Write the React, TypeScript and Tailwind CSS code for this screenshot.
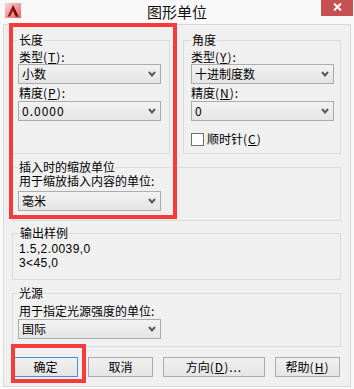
import React from 'react';

// mnemonic letter, underlined like a Win32 accelerator
const Mn: React.FC<{ children: React.ReactNode }> = ({ children }) => (
  <span className="underline underline-offset-[1px]">{children}</span>
);

// half-width run, spaced out like the dialog's bitmap font
const Lat: React.FC<{ children: React.ReactNode; className?: string }> = ({ children, className = '' }) => (
  <span className={`tracking-[1px] ${className}`}>{children}</span>
);

const Combo: React.FC<{ value: React.ReactNode; className?: string }> = ({ value, className = '' }) => (
  <div
    className={`flex h-[20px] w-[143px] items-center justify-between border border-[#acacac] bg-linear-to-b from-[#f2f2f2] to-[#e5e5e5] pl-[3px] pr-[4px] ${className}`}
  >
    <span>{value}</span>
    <svg width="8" height="6" viewBox="0 0 8 6">
      <path d="M1 1 L4 4.5 L7 1" fill="none" stroke="#5a5a5a" strokeWidth="2" />
    </svg>
  </div>
);

const Group: React.FC<{ title: string; className?: string; children?: React.ReactNode }> = ({
  title,
  className = '',
  children,
}) => (
  <fieldset className={`border border-[#dcdcdc] ${className}`}>
    <legend className="px-[1px] leading-[14px]">{title}</legend>
    {children}
  </fieldset>
);

const Btn: React.FC<{ children: React.ReactNode; active?: boolean; className?: string }> = ({
  children,
  active,
  className = '',
}) => (
  <div
    className={`flex h-[20px] items-center justify-center border bg-linear-to-b from-[#f0f0f0] to-[#e5e5e5] ${
      active ? 'border-[#4a90d9]' : 'border-[#acacac]'
    } ${className}`}
  >
    {children}
  </div>
);

const AcadIcon = () => (
  <svg width="16" height="15" viewBox="0 0 16 15">
    <defs>
      <linearGradient id="acad" x1="0" y1="0" x2="1" y2="1">
        <stop offset="0" stopColor="#f9d6d6" />
        <stop offset="1" stopColor="#e26464" />
      </linearGradient>
    </defs>
    <rect width="16" height="15" fill="url(#acad)" />
    <path d="M2.5 13.5 L8 2 L13.5 13.5 L10.8 13.5 L8 7.8 L5.2 13.5 Z" fill="#a3161b" />
    <path d="M8 2 L13.5 13.5 L10.8 13.5 L8 7.8 Z" fill="#7c0d12" />
  </svg>
);

export default function App() {
  return (
    <div className="relative h-[389px] w-[354px] overflow-hidden bg-[#f9f9f9] font-['Noto_Sans_CJK_SC',sans-serif] text-[12px] leading-[14px] text-black">
      {/* title bar */}
      <div className="grid h-[24px] grid-cols-[1fr_auto_1fr]">
        <div className="pl-[5px] pt-[3px]">
          <AcadIcon />
        </div>
        <div className="pt-[3px] text-[15px] leading-[18px] text-[#111]">图形单位</div>
        <div className="flex justify-end pr-[1px]">
          <div className="flex h-[16px] w-[32px] items-start justify-center bg-[#c75050] pt-[3px]">
            <svg width="9" height="8" viewBox="0 0 9 8">
              <path d="M1 0.5 L8 7.5 M8 0.5 L1 7.5" stroke="#fff" strokeWidth="2" />
            </svg>
          </div>
        </div>
      </div>

      {/* dialog body */}
      <div className="mx-[3px] h-[363px] border border-[#d9d9d9] bg-[#f0f0f0] px-[8px] pt-[8px]">
        <div className="flex gap-[13px]">
          <Group title="长度" className="h-[121px] w-[158px] pl-[5px]">
            <div className="ml-[1px] mt-[3px]">
              类型<Lat>(<Mn>T</Mn>):</Lat>
            </div>
            <Combo value="小数" />
            <div className="ml-[1px] mt-[2px]">
              精度<Lat>(<Mn>P</Mn>):</Lat>
            </div>
            <Combo value={<Lat>0.0000</Lat>} className="mt-[1px]" />
          </Group>
          <Group title="角度" className="h-[121px] w-[158px] pl-[7px]">
            <div className="mt-[3px]">
              类型<Lat>(<Mn>Y</Mn>):</Lat>
            </div>
            <Combo value="十进制度数" />
            <div className="mt-[2px]">
              精度<Lat>(<Mn>N</Mn>):</Lat>
            </div>
            <Combo value="0" className="mt-[1px]" />
            <div className="mt-[11px] flex items-center gap-[3px]">
              <div className="h-[13px] w-[13px] border border-[#707070] bg-white" />
              <span>
                顺时针<Lat>(<Mn>C</Mn>)</Lat>
              </span>
            </div>
          </Group>
        </div>

        <Group title="插入时的缩放单位" className="mt-[6px] h-[61px] w-[329px] pl-[5px]">
          <div className="ml-[1px]">用于缩放插入内容的单位:</div>
          <Combo value="毫米" className="mt-[3px]" />
        </Group>

        <Group title="输出样例" className="mt-[5px] h-[54px] w-[329px] pl-[6px]">
          <div className="mt-[2px] font-['Liberation_Sans',sans-serif] tracking-[0.4px]">1.5,2.0039,0</div>
          <div className="font-['Liberation_Sans',sans-serif] tracking-[0.4px]">3&lt;45,0</div>
        </Group>

        <Group title="光源" className="mt-[6px] h-[61px] w-[329px] pl-[5px]">
          <div className="ml-[1px] mt-[4px]">用于指定光源强度的单位:</div>
          <Combo value="国际" className="mt-[1px]" />
        </Group>

        <div className="mt-[10px] flex gap-[10px] pl-[1px]">
          <Btn active className="w-[65px]">
            确定
          </Btn>
          <Btn className="w-[65px]">取消</Btn>
          <Btn className="w-[102px]">
            方向<Lat>(<Mn>D</Mn>)...</Lat>
          </Btn>
          <Btn className="w-[65px]">
            帮助<Lat>(<Mn>H</Mn>)</Lat>
          </Btn>
        </div>
      </div>

      {/* red annotation boxes drawn over the dialog */}
      <div className="absolute left-[9px] top-[23px] h-[196px] w-[168px] border-[4px] border-[#f63b3b]" />
      <div className="absolute left-[11px] top-[344px] h-[39px] w-[75px] border-[4px] border-[#f63b3b]" />
    </div>
  );
}
